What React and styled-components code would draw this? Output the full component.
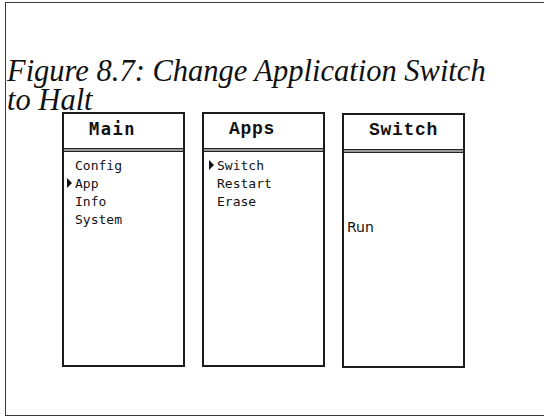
import styled, { createGlobalStyle } from "styled-components";

const GlobalStyle = createGlobalStyle`
  html, body {
    margin: 0;
    padding: 0;
    background: #ffffff;
    overflow: hidden;
  }
`;

const menus = [
  { title: "Main", font: "sans", indent: 3, items: ["Config", "App", "Info", "System"], selected: 1 },
  { title: "Apps", font: "slab", indent: 5, items: ["Switch", "Restart", "Erase"], selected: 0 },
];

export default function App() {
  return (
    <>
      <GlobalStyle />
      <Frame>
        <Caption>Figure 8.7: Change Application Switch to Halt</Caption>
        <Screens>
          {menus.map((menu) => (
            <Screen key={menu.title}>
              <ScreenHeader $font={menu.font}>{menu.title}</ScreenHeader>
              <Rule />
              <ItemList $indent={menu.indent}>
                {menu.items.map((item, i) => (
                  <Item key={item}>
                    <Cursor $visible={i === menu.selected} />
                    {item}
                  </Item>
                ))}
              </ItemList>
            </Screen>
          ))}
          <Screen $shift>
            <ScreenHeader $font="slab">Switch</ScreenHeader>
            <Rule />
            <ValueText>Run</ValueText>
          </Screen>
        </Screens>
      </Frame>
    </>
  );
}

const Frame = styled.div`
  margin: 2px 0 0 5px;
  width: 620px;
  height: 414px;
  box-sizing: border-box;
  border: 1px solid #3a3a3a;
  padding: 54px 0 0 1px;
`;

const Caption = styled.div`
  width: 500px;
  font-family: "Liberation Serif", "DejaVu Serif", serif;
  font-style: italic;
  font-size: 30.5px;
  line-height: 29px;
  color: #111;
`;

const Screens = styled.div`
  display: flex;
  gap: 17px;
  margin: -3px 0 0 55px;
  align-items: flex-start;
`;

const Screen = styled.div`
  width: 123px;
  height: 255px;
  box-sizing: border-box;
  border: 2px solid #1c1c1c;
  display: flex;
  flex-direction: column;
  margin-top: ${(p) => (p.$shift ? "1px" : "0")};
`;

const ScreenHeader = styled.div`
  height: 34px;
  box-sizing: border-box;
  display: flex;
  align-items: center;
  padding: 0 0 4px 25px;
  font-family: ${(p) =>
    p.$font === "slab"
      ? `"Liberation Mono", "Courier New", monospace`
      : `"DejaVu Sans Mono", monospace`};
  font-weight: bold;
  font-size: ${(p) => (p.$font === "slab" ? "18px" : "17px")};
  letter-spacing: ${(p) => (p.$font === "slab" ? "0.7px" : "1.5px")};
  color: #111;
`;

const Rule = styled.div`
  height: 2px;
  border-top: 1px solid #222;
  border-bottom: 1px solid #222;
  background: #9a9a9a;
`;

const ItemList = styled.div`
  display: flex;
  flex-direction: column;
  padding: 4px 0 0 ${(p) => p.$indent}px;
`;

const Item = styled.div`
  display: flex;
  align-items: center;
  height: 18px;
  font-family: "DejaVu Sans Mono", monospace;
  font-size: 13px;
  color: #111;
`;

const Cursor = styled.span`
  width: 8px;
  height: 10px;
  flex: none;
  display: flex;
  align-items: center;

  &::before {
    content: "";
    display: ${(p) => (p.$visible ? "block" : "none")};
    border-top: 5px solid transparent;
    border-bottom: 5px solid transparent;
    border-left: 5px solid #111;
  }
`;

const ValueText = styled.div`
  margin-top: 66px;
  padding-left: 3px;
  font-family: "DejaVu Sans", sans-serif;
  font-size: 14px;
  color: #111;
`;
